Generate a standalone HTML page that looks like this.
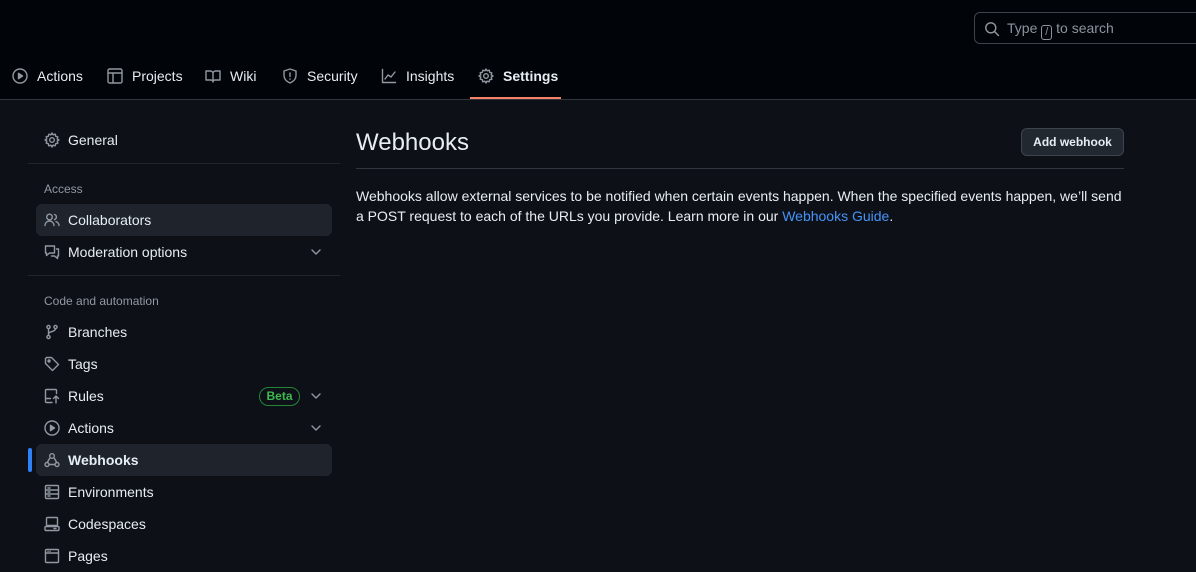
<!DOCTYPE html>
<html><head><meta charset="utf-8"><style>
*{box-sizing:border-box;margin:0;padding:0}
body{width:1196px;height:561px;overflow:hidden;background:#0d1117;font-family:"Liberation Sans",sans-serif;color:#e6edf3;font-size:14px;position:relative}
.hdr{position:absolute;left:0;top:0;width:1196px;height:100px;background:#010409;border-bottom:1px solid #30363d}
.search{position:absolute;left:974px;top:12px;width:240px;height:32px;border:1px solid #3d444d;border-radius:6px;color:#8b949e;font-size:14px}
.search svg{position:absolute;left:9px;top:8px}
.search span.t{position:absolute;left:32px;top:7px}
.kbd{display:inline-block;border:1px solid #8b949e;border-radius:3px;width:11px;height:15px;font-size:11px;text-align:center;line-height:13px;vertical-align:-2px}
.nav{position:absolute;top:66px;height:20px;display:flex;align-items:center;color:#e6edf3;font-size:14px}
.nav svg{margin-right:9px}
.uline{position:absolute;left:470px;top:97px;width:91px;height:2px;background:#f78166}
svg{fill:none;stroke:#9198a1;stroke-width:1.4;stroke-linecap:round;stroke-linejoin:round}
.si{position:absolute;left:36px;width:296px;height:32px;display:flex;align-items:center;padding-left:8px;font-size:14px;color:#e6edf3;border-radius:6px}
.si svg{margin-right:8px}
.si.sel{background:#1f242c}
.si svg.chev{position:absolute;right:10px;top:10px;margin:0}
.sep{position:absolute;left:28px;width:312px;height:1px;background:#21262d}
.hd{position:absolute;left:44px;font-size:12px;color:#9198a1}
.beta{position:absolute;left:223px;top:7px;width:41px;height:19px;border:1px solid #238636;border-radius:10px;color:#3fb950;font-size:12px;font-weight:bold;text-align:center;line-height:17px}
</style></head><body>
<div class="hdr"></div>
<div class="search"><svg width="16" height="16" viewBox="0 0 16 16"><circle cx="6.8" cy="6.8" r="5"/><path d="M10.5 10.5L14.5 14.5"/></svg><span class="t">Type <span class="kbd">/</span> to search</span></div>

<div class="nav" style="left:12px"><svg width="16" height="16" viewBox="0 0 16 16"><circle cx="8" cy="8" r="7"/><path d="M6.5 5.3v5.4L10.5 8z" fill="#9198a1"/></svg>Actions</div>
<div class="nav" style="left:107px"><svg width="16" height="16" viewBox="0 0 16 16"><rect x="1" y="1" width="14" height="14" rx="1.5"/><path d="M1 5h14M6 5v10"/></svg>Projects</div>
<div class="nav" style="left:205px"><svg width="16" height="16" viewBox="0 0 16 16"><path d="M1 3h4.5a2.5 2.5 0 012.5 2.5V14a2 2 0 00-2-2H1zM15 3h-4.5A2.5 2.5 0 008 5.5V14a2 2 0 012-2h5z"/></svg>Wiki</div>
<div class="nav" style="left:282px"><svg width="16" height="16" viewBox="0 0 16 16"><path d="M8 1L2 3v4.5c0 3.5 2.5 6 6 7.5 3.5-1.5 6-4 6-7.5V3z"/><path d="M8 5v3.5M8 11v.2"/></svg>Security</div>
<div class="nav" style="left:381px"><svg width="16" height="16" viewBox="0 0 16 16"><path d="M1.5 1.5v13h13M4 11l3-4 3 2 4-5"/></svg>Insights</div>
<div class="nav" style="left:478px;font-weight:bold"><svg width="16" height="16" viewBox="0 0 16 16"><circle cx="8" cy="8" r="2.3"/><path d="M8 1l1.2 1.8 2.1-.6.4 2.1 2.1.6-.6 2.1L15 8l-1.8 1.2.6 2.1-2.1.4-.6 2.1-2.1-.6L8 15l-1.2-1.8-2.1.6-.4-2.1-2.1-.6.6-2.1L1 8l1.8-1.2-.6-2.1 2.1-.4.6-2.1 2.1.6z"/></svg>Settings</div>
<div class="uline"></div>

<div class="si" style="top:124px"><svg width="16" height="16" viewBox="0 0 16 16"><circle cx="8" cy="8" r="2.3"/><path d="M8 1l1.2 1.8 2.1-.6.4 2.1 2.1.6-.6 2.1L15 8l-1.8 1.2.6 2.1-2.1.4-.6 2.1-2.1-.6L8 15l-1.2-1.8-2.1.6-.4-2.1-2.1-.6.6-2.1L1 8l1.8-1.2-.6-2.1 2.1-.4.6-2.1 2.1.6z"/></svg>General</div>
<div class="sep" style="top:163px"></div>
<div class="hd" style="top:182px">Access</div>
<div class="si sel" style="top:204px"><svg width="16" height="16" viewBox="0 0 16 16"><circle cx="5.5" cy="5" r="2.8"/><path d="M1 13.5c0-2.5 2-4.5 4.5-4.5s4.5 2 4.5 4.5M10.5 2.5a2.6 2.6 0 010 5M12 9.5c1.7.7 3 2.2 3 4"/></svg>Collaborators</div>
<div class="si" style="top:236px"><svg width="16" height="16" viewBox="0 0 16 16"><path d="M1.5 2h9v7h-5l-3 2.5V9h-1zM12.5 5h2v7h-1v2.5l-3-2.5h-3"/></svg>Moderation options<svg class="chev" width="12" height="12" viewBox="0 0 12 12"><path d="M2 4l4 4 4-4"/></svg></div>
<div class="sep" style="top:275px"></div>
<div class="hd" style="top:294px">Code and automation</div>
<div class="si" style="top:316px"><svg width="16" height="16" viewBox="0 0 16 16"><circle cx="4.5" cy="3" r="1.6"/><circle cx="4.5" cy="13" r="1.6"/><circle cx="11.5" cy="3" r="1.6"/><path d="M4.5 4.6v6.8M11.5 4.6c0 3.5-7 2.5-7 5.5"/></svg>Branches</div>
<div class="si" style="top:348px"><svg width="16" height="16" viewBox="0 0 16 16"><path d="M1.5 2.5v5l7 7 6-6-7-7h-5z"/><circle cx="5" cy="5" r="1" fill="#9198a1"/></svg>Tags</div>
<div class="si" style="top:380px"><svg width="16" height="16" viewBox="0 0 16 16"><path d="M8 14.5H2.5a1 1 0 01-1-1v-11a1 1 0 011-1h9a1 1 0 011 1v3M1.5 10.5h5M12 8v7M9.5 10.5L12 8l2.5 2.5"/></svg>Rules<span class="beta">Beta</span><svg class="chev" width="12" height="12" viewBox="0 0 12 12"><path d="M2 4l4 4 4-4"/></svg></div>
<div class="si" style="top:412px"><svg width="16" height="16" viewBox="0 0 16 16"><circle cx="8" cy="8" r="7"/><path d="M6.5 5.3v5.4L10.5 8z" fill="#9198a1"/></svg>Actions<svg class="chev" width="12" height="12" viewBox="0 0 12 12"><path d="M2 4l4 4 4-4"/></svg></div>
<div style="position:absolute;left:28px;top:448px;width:4px;height:24px;background:#2f81f7;border-radius:2px"></div>
<div class="si sel" style="top:444px;font-weight:bold"><svg width="16" height="16" viewBox="0 0 16 16"><path d="M5.5 6.5L3.3 10.5M10.5 6.5l2.2 4M5 12.5h6"/><circle cx="8" cy="4" r="2.3"/><circle cx="3" cy="12.5" r="2"/><circle cx="13" cy="12.5" r="2"/></svg>Webhooks</div>
<div class="si" style="top:476px"><svg width="16" height="16" viewBox="0 0 16 16"><rect x="1.5" y="1.5" width="13" height="13" rx="1"/><path d="M1.5 6h13M1.5 10h13M4 4h2M4 8h2M4 12h2"/></svg>Environments</div>
<div class="si" style="top:508px"><svg width="16" height="16" viewBox="0 0 16 16"><rect x="2.5" y="1.5" width="11" height="8" rx="1"/><rect x="1" y="10.5" width="14" height="4" rx="1"/><path d="M10 12.5h2"/></svg>Codespaces</div>
<div class="si" style="top:540px"><svg width="16" height="16" viewBox="0 0 16 16"><rect x="1.5" y="1.5" width="13" height="13" rx="1"/><path d="M1.5 5h13M4 3.3h.1M6 3.3h.1"/></svg>Pages</div>

<div style="position:absolute;left:356px;top:129px;font-size:24px;color:#e6edf3">Webhooks</div>
<div style="position:absolute;left:356px;top:168px;width:768px;height:1px;background:#30363d"></div>
<div style="position:absolute;left:1021px;top:128px;width:103px;height:28px;background:#212830;border:1px solid #3d444d;border-radius:6px;font-size:12px;font-weight:bold;text-align:center;line-height:26px;color:#e6edf3">Add webhook</div>
<div style="position:absolute;left:356px;top:186px;width:775px;font-size:14px;line-height:20px;color:#e6edf3">Webhooks allow external services to be notified when certain events happen. When the specified events happen, we’ll send a POST request to each of the URLs you provide. Learn more in our <span style="color:#4493f8">Webhooks Guide</span>.</div>
</body></html>
